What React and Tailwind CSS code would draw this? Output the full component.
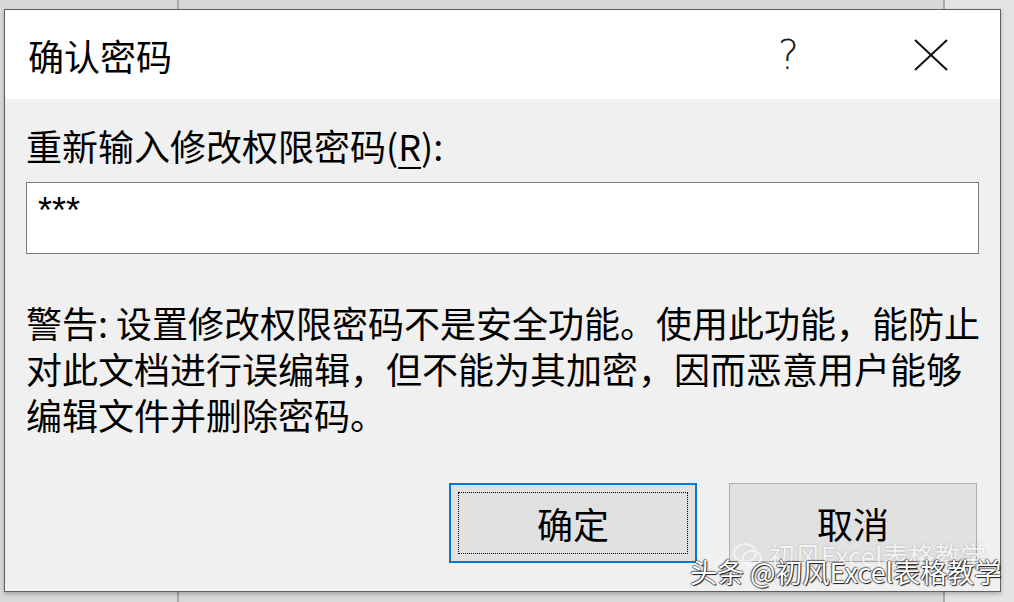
export default function App() {
  const cjk = { fontFamily: '"Noto Sans CJK SC", "Noto Sans", sans-serif' };
  return (
    <div
      className="relative w-[1014px] h-[602px] overflow-hidden bg-[#d9d9d9] bg-[linear-gradient(to_right,transparent_177px,#a9a9a9_177px,#a9a9a9_179px,transparent_179px,transparent_943px,#a9a9a9_943px,#a9a9a9_945px,#e4e4e4_945px)] flex"
      style={cjk}
    >
      <div className="ml-[4px] mt-[9px] w-[997px] h-[583px] border border-[#5f5f5f] bg-[#f0f0f0] flex flex-col shadow-[0_2px_4px_rgba(0,0,0,0.25)]">
        {/* Title bar */}
        <div className="h-[89px] bg-white flex items-center pl-[23px] text-black">
          <div className="text-[36px] leading-[46px] flex-1">确认密码</div>
          <div
            className="text-[40px] leading-[46px] font-light text-[#1a1a1a] mr-[115px]"
            style={{ fontFamily: '"DejaVu Sans", "Noto Sans", sans-serif', fontWeight: 200 }}
          >
            ?
          </div>
          <svg width="34" height="32" viewBox="0 0 34 32" className="mr-[52px]">
            <path d="M1 1 L33 31 M33 1 L1 31" stroke="#111" strokeWidth="2" fill="none" />
          </svg>
        </div>

        {/* Body */}
        <div className="flex flex-col px-[21px] pt-[23px] text-black">
          <div className="text-[36px] leading-[46px]">
            重新输入修改权限密码(<span className="underline underline-offset-[6px] decoration-[2px]">R</span>):
          </div>
          <div className="mt-[14px] h-[72px] bg-white border border-[#7a7a7a] pl-[11px] pt-[8px]">
            <div
              className="text-[36px] leading-[40px] text-black"
              style={{ fontFamily: '"Liberation Sans", Arial, sans-serif' }}
            >
              ***
            </div>
          </div>
          <div className="mt-[45px] text-[36px] leading-[46px] whitespace-nowrap">
            <div>警告: 设置修改权限密码不是安全功能。使用此功能，能防止</div>
            <div>对此文档进行误编辑，但不能为其加密，因而恶意用户能够</div>
            <div>编辑文件并删除密码。</div>
          </div>
          <div className="mt-[46px] flex justify-end gap-[32px] pr-[2px]">
            <div className="w-[248px] h-[80px] bg-[#e1e1e1] border-2 border-[#0078d7] p-[7px] flex">
              <div className="flex-1 border border-dotted border-black flex items-center justify-center text-[36px] leading-[46px]">
                确定
              </div>
            </div>
            <div className="w-[248px] h-[79px] bg-[#e1e1e1] border border-[#adadad] flex items-center justify-center text-[36px] leading-[46px]">
              取消
            </div>
          </div>
        </div>
      </div>

      {/* Watermark */}
      <div className="absolute left-[733px] top-[542px] flex items-center gap-[6px] opacity-60">
        <svg width="30" height="26" viewBox="0 0 30 26">
          <ellipse cx="12" cy="11" rx="11" ry="9" fill="none" stroke="white" strokeWidth="2" />
          <ellipse cx="19" cy="16" rx="9" ry="7" fill="none" stroke="white" strokeWidth="2" />
        </svg>
        <div className="text-[26px] leading-[26px] text-white [text-shadow:0_0_2px_rgba(0,0,0,0.4)]">
          初风Excel表格教学
        </div>
      </div>
      <div className="absolute left-[690px] top-[556px] text-[27px] leading-[32px] text-white whitespace-nowrap [text-shadow:1px_1px_1px_rgba(0,0,0,0.9),-1px_0_1px_rgba(0,0,0,0.6),0_-1px_1px_rgba(0,0,0,0.5)]">
        头条 @初风Excel表格教学
      </div>
    </div>
  );
}
